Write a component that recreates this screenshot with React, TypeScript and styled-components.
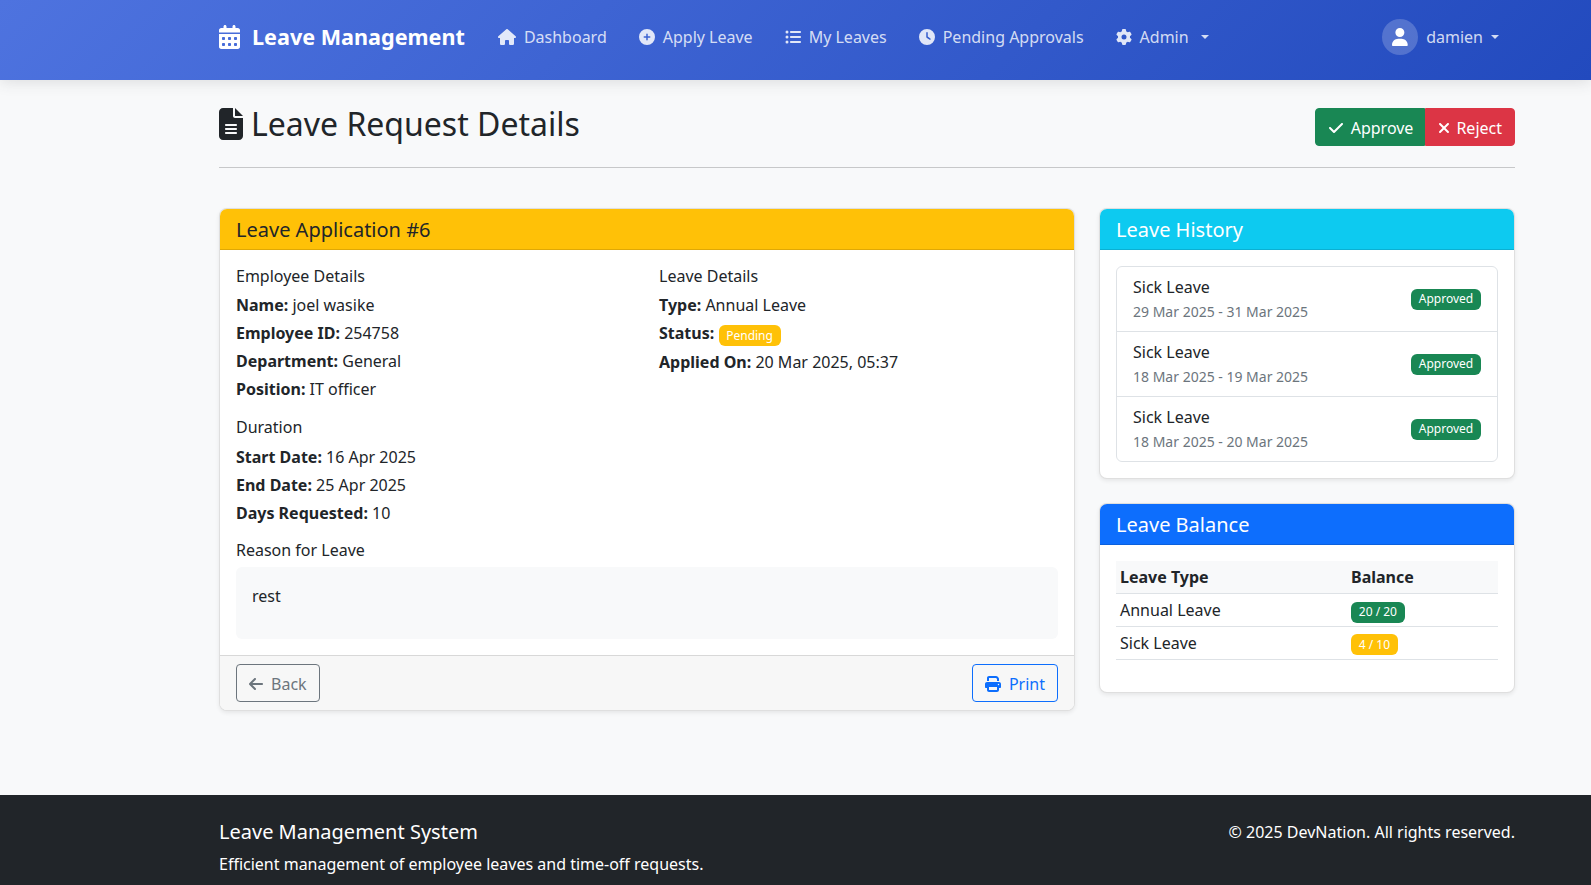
import React, { FC, ReactNode } from 'react';
import styled, { createGlobalStyle } from 'styled-components';
import {
  FaArrowLeft,
  FaCalendarDays,
  FaCheck,
  FaCirclePlus,
  FaClock,
  FaFileLines,
  FaGear,
  FaHouse,
  FaListUl,
  FaPrint,
  FaUser,
  FaXmark,
} from 'react-icons/fa6';

const colors = {
  text: '#212529',
  muted: '#6c757d',
  page: '#f8f9fa',
  border: '#dee2e6',
  success: '#198754',
  danger: '#dc3545',
  warning: '#ffc107',
  info: '#0dcaf0',
  primary: '#0d6efd',
};

const GlobalStyle = createGlobalStyle`
  * {
    box-sizing: border-box;
  }

  body {
    margin: 0;
    background: ${colors.page};
    color: ${colors.text};
    font-family: 'Noto Sans', 'Liberation Sans', sans-serif;
    font-size: 16px;
    line-height: 1.5;
  }

  /* react-icons draws everything in a 1em square; give the glyphs their real width */
  svg {
    flex-shrink: 0;
  }

  svg[viewBox='0 0 576 512'] {
    width: 1.125em;
  }

  svg[viewBox='0 0 448 512'] {
    width: 0.875em;
  }

  svg[viewBox='0 0 384 512'] {
    width: 0.75em;
  }
`;

const Container = styled.div`
  width: 1296px;
  margin-left: 219px;
`;

const Navbar = styled.nav`
  position: relative;
  height: 80px;
  padding: 19px 0 25px;
  background: linear-gradient(135deg, #4e73df 0%, #224abe 100%);
  box-shadow: 0 2px 14px rgba(58, 59, 69, 0.15);
`;

const NavInner = styled(Container)`
  display: flex;
  align-items: center;
  height: 36px;
`;

const Brand = styled.a`
  display: flex;
  align-items: center;
  gap: 12px;
  margin-right: 17px;
  color: #fff;
  font-size: 21.6px;
  font-weight: 700;

  svg {
    font-size: 24px;
  }
`;

const NavLink = styled.a`
  display: flex;
  align-items: center;
  gap: 8px;
  padding: 0 16px;
  color: rgba(255, 255, 255, 0.8);

  svg {
    color: rgba(255, 255, 255, 0.85);
  }
`;

const Caret = styled.span<{ gap: number }>`
  width: 0;
  height: 0;
  margin-left: ${({ gap }) => gap}px;
  border-top: 4.8px solid currentColor;
  border-right: 4.8px solid transparent;
  border-left: 4.8px solid transparent;
`;

const UserMenu = styled(NavLink)`
  margin-left: auto;
  gap: 0;
`;

const Avatar = styled.span`
  display: flex;
  align-items: center;
  justify-content: center;
  width: 36px;
  height: 36px;
  margin-right: 8px;
  border-radius: 50%;
  background: rgba(255, 255, 255, 0.2);
  font-size: 18px;

  svg {
    color: #fff;
  }
`;

const Main = styled(Container)`
  padding: 25px 0 84px;
`;

const PageHeader = styled.div`
  display: flex;
  align-items: flex-start;
  justify-content: space-between;
  padding-bottom: 21.4px;
  margin-bottom: 40px;
  border-bottom: 1px solid #c7c8c9;
`;

const PageTitle = styled.h1`
  display: flex;
  align-items: center;
  gap: 8px;
  margin: 0;
  font-size: 32px;
  font-weight: 400;
  line-height: 1.2;
`;

const ButtonGroup = styled.div`
  display: flex;
  margin-top: 3px;
`;

const GroupButton = styled.button<{ $bg: string; $side: 'left' | 'right'; $gap: number }>`
  display: flex;
  align-items: center;
  gap: ${({ $gap }) => $gap}px;
  height: 38px;
  padding: 1px 12px 0;
  border: 1px solid ${({ $bg }) => $bg};
  border-radius: ${({ $side }) => ($side === 'left' ? '4px 0 0 4px' : '0 4px 4px 0')};
  background: ${({ $bg }) => $bg};
  color: #fff;
  font: inherit;
`;

const ApproveButton = styled(GroupButton)`
  padding-right: 11px;
  padding-left: 13px;
`;

const Columns = styled.div`
  display: grid;
  grid-template-columns: 856px 416px;
  gap: 24px;
  align-items: start;
`;

const Side = styled.div`
  display: flex;
  flex-direction: column;
  gap: 24px;
`;

const Card = styled.section`
  overflow: hidden;
  border: 1px solid rgba(0, 0, 0, 0.125);
  border-radius: 8px;
  background: #fff;
  box-shadow: 0 2px 4px rgba(0, 0, 0, 0.075);
`;

const CardHeader = styled.h2<{ $bg: string; $light?: boolean }>`
  margin: 0;
  padding: 9px 16px 7px;
  border-bottom: 1px solid rgba(0, 0, 0, 0.125);
  background: ${({ $bg }) => $bg};
  color: ${({ $light }) => ($light ? '#fff' : colors.text)};
  font-size: 20px;
  font-weight: 400;
  line-height: 24px;
`;

const CardBody = styled.div`
  padding: 16px;
`;

const CardFooter = styled.div`
  display: flex;
  justify-content: space-between;
  padding: 8px 16px;
  border-top: 1px solid rgba(0, 0, 0, 0.125);
  background: #f7f7f7;
`;

const DetailGrid = styled.div`
  display: grid;
  grid-template-columns: 423px 1fr;
  padding-bottom: 1px;

  h3 {
    margin-bottom: 6px;
    padding-top: 1px;
  }
`;

const SectionTitle = styled.h3<{ $spaced?: boolean }>`
  margin: ${({ $spaced }) => ($spaced ? '16px' : '0')} 0 8px;
  font-size: 16px;
  font-weight: 400;
  line-height: 1.2;
`;

const Detail = styled.p`
  margin: 0 0 4px;

  &:last-child {
    margin-bottom: 0;
  }

  strong {
    font-weight: 700;
  }
`;

const Badge = styled.span<{ $bg: string }>`
  display: inline-block;
  padding: 4.2px 7.8px;
  border-radius: 6px;
  background: ${({ $bg }) => $bg};
  color: #fff;
  font-size: 12px;
  line-height: 1;
  white-space: nowrap;
`;

const StatusBadge = styled(Badge)`
  margin-left: 0.8px;
  padding-left: 7px;
  vertical-align: -1px;
`;

const ReasonBox = styled.div`
  height: 72px;
  margin-top: -1px;
  padding: 17px 16px 0;
  border-radius: 6px;
  background: ${colors.page};
`;

const OutlineButton = styled.button<{ $color: string }>`
  display: flex;
  align-items: center;
  gap: 8px;
  height: 38px;
  padding: 2px 12px 0;
  border: 1px solid ${({ $color }) => $color};
  border-radius: 4px;
  background: transparent;
  color: ${({ $color }) => $color};
  font: inherit;
`;

const HistoryList = styled.ul`
  margin: 0;
  padding: 0;
  border: 1px solid ${colors.border};
  border-radius: 6px;
  list-style: none;
`;

const HistoryItem = styled.li`
  display: flex;
  align-items: center;
  justify-content: space-between;
  height: 64px;
  padding: 0 16px;

  & + & {
    height: 65px;
    border-top: 1px solid ${colors.border};
  }
`;

const HistoryName = styled.div`
  margin-bottom: 2px;
`;

const HistoryDates = styled.small`
  display: block;
  margin-bottom: 2px;
  color: ${colors.muted};
  font-size: 14px;
`;

const BalanceTable = styled.table`
  width: 100%;
  margin-bottom: 16px;
  border-collapse: collapse;
  table-layout: fixed;

  th,
  td {
    height: 32px;
    padding: 4px;
    border-bottom: 1px solid ${colors.border};
    text-align: left;
  }

  td {
    padding-bottom: 3px;
  }

  tr:last-child td {
    padding-bottom: 4px;
  }

  th {
    background: ${colors.page};
    font-weight: 700;
  }

  th:first-child {
    width: 231px;
  }
`;

const Footer = styled.footer`
  padding: 25px 0 9px;
  background: ${colors.text};
  color: #fff;
`;

const FooterInner = styled(Container)`
  display: flex;
  justify-content: space-between;
`;

const FooterTitle = styled.h5`
  margin: 0 0 8px;
  font-size: 20px;
  font-weight: 400;
  line-height: 24px;
`;

const FooterText = styled.p`
  margin: 0;
`;

interface IDetailRowProps {
  label: string;
  children: ReactNode;
}

const DetailRow: FC<IDetailRowProps> = ({ label, children }) => (
  <Detail>
    <strong>{label}:</strong> {children}
  </Detail>
);

const history = [
  '29 Mar 2025 - 31 Mar 2025',
  '18 Mar 2025 - 19 Mar 2025',
  '18 Mar 2025 - 20 Mar 2025',
];

const App: FC = () => (
  <>
    <GlobalStyle />
    <Navbar>
      <NavInner>
        <Brand>
          <FaCalendarDays />
          Leave Management
        </Brand>
        <NavLink>
          <FaHouse />
          Dashboard
        </NavLink>
        <NavLink>
          <FaCirclePlus />
          Apply Leave
        </NavLink>
        <NavLink>
          <FaListUl />
          My Leaves
        </NavLink>
        <NavLink>
          <FaClock />
          Pending Approvals
        </NavLink>
        <NavLink>
          <FaGear />
          Admin
          <Caret gap={4} />
        </NavLink>
        <UserMenu>
          <Avatar>
            <FaUser />
          </Avatar>
          damien
          <Caret gap={8} />
        </UserMenu>
      </NavInner>
    </Navbar>

    <Main>
      <PageHeader>
        <PageTitle>
          <FaFileLines />
          Leave Request Details
        </PageTitle>
        <ButtonGroup>
          <ApproveButton $bg={colors.success} $side='left' $gap={8}>
            <FaCheck />
            Approve
          </ApproveButton>
          <GroupButton $bg={colors.danger} $side='right' $gap={6}>
            <FaXmark />
            Reject
          </GroupButton>
        </ButtonGroup>
      </PageHeader>

      <Columns>
        <Card>
          <CardHeader $bg={colors.warning}>Leave Application #6</CardHeader>
          <CardBody>
            <DetailGrid>
              <div>
                <SectionTitle>Employee Details</SectionTitle>
                <DetailRow label='Name'>joel wasike</DetailRow>
                <DetailRow label='Employee ID'>254758</DetailRow>
                <DetailRow label='Department'>General</DetailRow>
                <DetailRow label='Position'>IT officer</DetailRow>
              </div>
              <div>
                <SectionTitle>Leave Details</SectionTitle>
                <DetailRow label='Type'>Annual Leave</DetailRow>
                <DetailRow label='Status'>
                  <StatusBadge $bg={colors.warning}>Pending</StatusBadge>
                </DetailRow>
                <DetailRow label='Applied On'>20 Mar 2025, 05:37</DetailRow>
              </div>
            </DetailGrid>
            <SectionTitle $spaced>Duration</SectionTitle>
            <DetailRow label='Start Date'>16 Apr 2025</DetailRow>
            <DetailRow label='End Date'>25 Apr 2025</DetailRow>
            <Detail>
              <strong>Days Requested:</strong> 10
            </Detail>
            <SectionTitle $spaced>Reason for Leave</SectionTitle>
            <ReasonBox>rest</ReasonBox>
          </CardBody>
          <CardFooter>
            <OutlineButton $color={colors.muted}>
              <FaArrowLeft />
              Back
            </OutlineButton>
            <OutlineButton $color={colors.primary}>
              <FaPrint />
              Print
            </OutlineButton>
          </CardFooter>
        </Card>

        <Side>
          <Card>
            <CardHeader $bg={colors.info} $light>
              Leave History
            </CardHeader>
            <CardBody>
              <HistoryList>
                {history.map((dates) => (
                  <HistoryItem key={dates}>
                    <div>
                      <HistoryName>Sick Leave</HistoryName>
                      <HistoryDates>{dates}</HistoryDates>
                    </div>
                    <Badge $bg={colors.success}>Approved</Badge>
                  </HistoryItem>
                ))}
              </HistoryList>
            </CardBody>
          </Card>

          <Card>
            <CardHeader $bg={colors.primary} $light>
              Leave Balance
            </CardHeader>
            <CardBody>
              <BalanceTable>
                <thead>
                  <tr>
                    <th>Leave Type</th>
                    <th>Balance</th>
                  </tr>
                </thead>
                <tbody>
                  <tr>
                    <td>Annual Leave</td>
                    <td>
                      <Badge $bg={colors.success}>20 / 20</Badge>
                    </td>
                  </tr>
                  <tr>
                    <td>Sick Leave</td>
                    <td>
                      <Badge $bg={colors.warning}>4 / 10</Badge>
                    </td>
                  </tr>
                </tbody>
              </BalanceTable>
            </CardBody>
          </Card>
        </Side>
      </Columns>
    </Main>

    <Footer>
      <FooterInner>
        <div>
          <FooterTitle>Leave Management System</FooterTitle>
          <FooterText>Efficient management of employee leaves and time-off requests.</FooterText>
        </div>
        <FooterText>© 2025 DevNation. All rights reserved.</FooterText>
      </FooterInner>
    </Footer>
  </>
);

export default App;
